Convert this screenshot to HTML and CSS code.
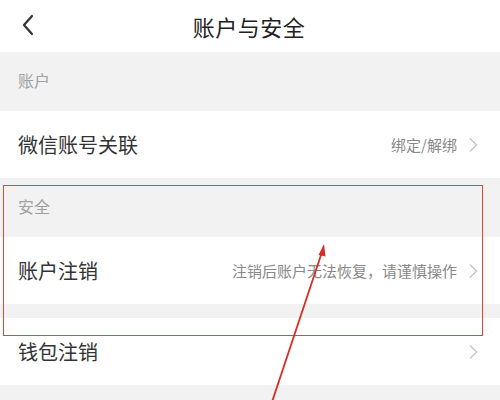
FILE: index.html
```html
<!DOCTYPE html>
<html lang="zh">
<head>
<meta charset="utf-8">
<link rel="stylesheet" href="styles.css">
</head>
<body>
<div class="page">
  <header class="topbar">
    <svg class="back" width="14" height="22" viewBox="0 0 14 22"><path d="M11 2 L3 11 L11 20" fill="none" stroke="#333" stroke-width="2.2" stroke-linecap="round" stroke-linejoin="round"/></svg>
    <h1 class="title">账户与安全</h1>
  </header>
  <div class="section-label">账户</div>
  <div class="row">
    <span class="row-title">微信账号关联</span>
    <span class="row-right"><span class="row-note">绑定/解绑</span><svg class="chev" width="10" height="16" viewBox="0 0 10 16"><path d="M2 1.5 L8.5 8 L2 14.5" fill="none" stroke="#c4c4c4" stroke-width="1.4"/></svg></span>
  </div>
  <div class="section-label">安全</div>
  <div class="row">
    <span class="row-title">账户注销</span>
    <span class="row-right"><span class="row-note">注销后账户无法恢复，请谨慎操作</span><svg class="chev" width="10" height="16" viewBox="0 0 10 16"><path d="M2 1.5 L8.5 8 L2 14.5" fill="none" stroke="#c4c4c4" stroke-width="1.4"/></svg></span>
  </div>
  <div class="gap"></div>
  <div class="row">
    <span class="row-title">钱包注销</span>
    <span class="row-right"><svg class="chev" width="10" height="16" viewBox="0 0 10 16"><path d="M2 1.5 L8.5 8 L2 14.5" fill="none" stroke="#c4c4c4" stroke-width="1.4"/></svg></span>
  </div>
  <div class="rest"></div>

  <div class="mark-box"></div>
  <svg class="mark-arrow" width="500" height="400" viewBox="0 0 500 400">
    <line x1="272" y1="402" x2="322" y2="252" stroke="#d42f25" stroke-width="1.8"/>
    <path d="M324 244 L318.5 255 L325.5 256.5 Z" fill="#d42f25"/>
  </svg>
</div>
</body>
</html>
```
FILE: styles.css
```css
html, body {
  margin: 0;
  padding: 0;
  background: #f2f2f2;
}
.page {
  position: relative;
  width: 500px;
  height: 400px;
  overflow: hidden;
  font-family: "Noto Sans CJK SC", "Noto Sans", sans-serif;
  background: #f2f2f2;
}
.topbar {
  height: 52px;
  background: #fff;
  display: flex;
  align-items: center;
  justify-content: center;
  position: relative;
}
.back {
  position: absolute;
  left: 21px;
  top: 14px;
}
.title {
  margin: 0;
  font-size: 22px;
  font-weight: 400;
  color: #222;
  letter-spacing: 0.5px;
  padding-right: 2px;
}
.section-label {
  height: 59px;
  padding-left: 18px;
  display: flex;
  align-items: center;
  font-size: 16px;
  color: #a0a0a0;
  background: #f2f2f2;
  box-sizing: border-box;
  padding-bottom: 3px;
}
.row {
  height: 67px;
  background: #fff;
  display: flex;
  align-items: center;
  justify-content: space-between;
  padding: 0 22px 0 18px;
  box-sizing: border-box;
}
.row-title {
  font-size: 20px;
  color: #333;
}
.row-right {
  display: flex;
  align-items: center;
  gap: 11px;
}
.row-note {
  font-size: 15px;
  color: #888;
}
.chev {
  display: block;
}
.gap {
  height: 14px;
  background: #f2f2f2;
}
.rest {
  height: 20px;
  background: #f2f2f2;
}
.mark-box {
  position: absolute;
  left: 3px;
  top: 185px;
  width: 480px;
  height: 151px;
  border: 1.6px solid #d9473d;
  box-sizing: border-box;
}
.mark-arrow {
  position: absolute;
  left: 0;
  top: 0;
}
```
